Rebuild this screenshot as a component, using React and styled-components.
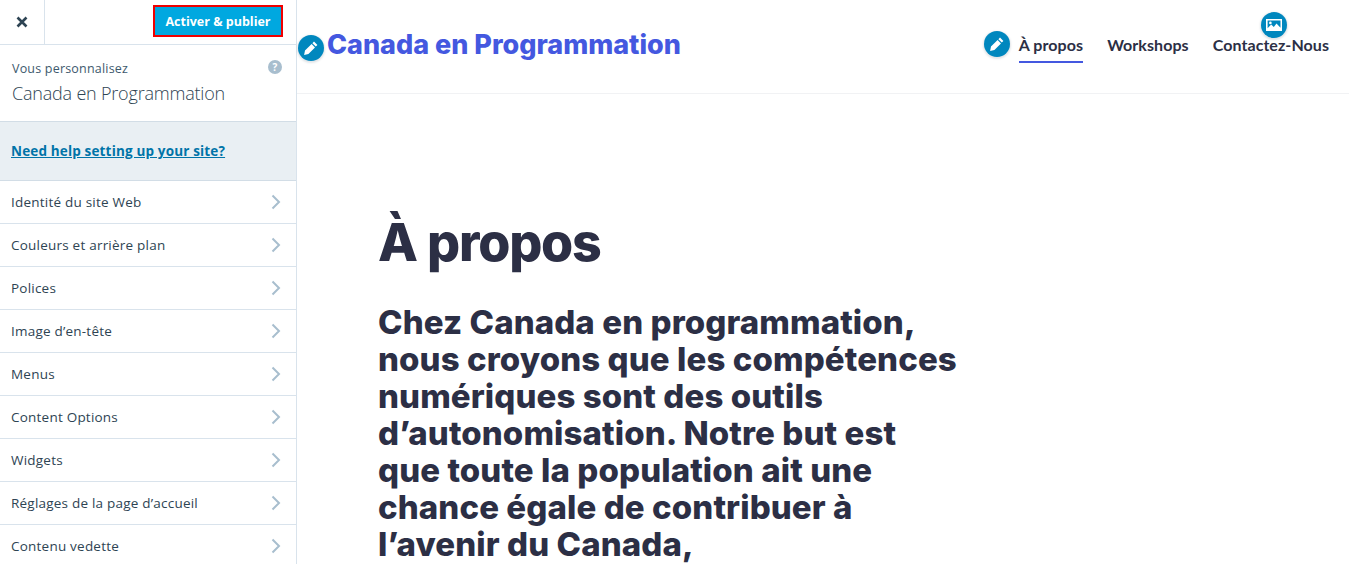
import React from "react";
import styled, { createGlobalStyle } from "styled-components";

const GlobalStyle = createGlobalStyle`
  html, body {
    margin: 0;
    padding: 0;
    height: 100%;
    overflow: hidden;
    background: #fff;
  }
  * {
    box-sizing: border-box;
  }
`;

//#region styled components
const Page = styled.div`
  display: flex;
  width: 1349px;
  height: 564px;
  overflow: hidden;
`;

const Sidebar = styled.aside`
  flex: 0 0 297px;
  height: 564px;
  border-right: 1px solid #d9e3ec;
  font-family: "Open Sans", sans-serif;
  overflow: hidden;
  background: #fff;
`;
const SideHeader = styled.div`
  display: flex;
  align-items: center;
  justify-content: space-between;
  height: 45px;
  padding-right: 13px;
  border-bottom: 1px solid #d9e3ec;
`;
const CloseBox = styled.div`
  display: flex;
  align-items: center;
  justify-content: center;
  width: 45px;
  height: 44px;
  border-right: 1px solid #d9e3ec;
  color: #2e4453;
`;
const Publish = styled.button`
  width: 130px;
  height: 32px;
  margin-top: -2px;
  padding: 0;
  border: 2px solid #f00000;
  background: #00a8e0;
  color: #fff;
  font-family: "Open Sans", sans-serif;
  font-size: 12.5px;
  font-weight: 700;
`;
const SiteInfo = styled.div`
  position: relative;
  height: 77px;
  padding: 16px 12px 0;
  border-bottom: 1px solid #d2dde6;
`;
const Small = styled.div`
  font-size: 12.5px;
  line-height: 16px;
  letter-spacing: 0.2px;
  color: #3d596d;
`;
const SiteName = styled.div`
  margin-top: 4px;
  font-size: 18px;
  font-weight: 300;
  line-height: 24px;
  letter-spacing: -0.2px;
  color: #2e4453;
`;
const HelpIcon = styled.span`
  position: absolute;
  top: 15px;
  right: 14px;
  display: flex;
  align-items: center;
  justify-content: center;
  width: 14px;
  height: 14px;
  border-radius: 50%;
  background: #a8bece;
  color: #fff;
  font-size: 10px;
  font-weight: 700;
`;
const HelpBand = styled.div`
  display: flex;
  align-items: center;
  height: 59px;
  padding-left: 11px;
  background: #e9eff3;
  border-bottom: 1px solid #d2dde6;
`;
const HelpLink = styled.a`
  font-size: 13.5px;
  font-weight: 700;
  letter-spacing: 0.16px;
  color: #0074a8;
  text-decoration: underline;
`;
const Row = styled.div`
  display: flex;
  align-items: center;
  justify-content: space-between;
  height: 43px;
  padding: 0 15px 0 11px;
  border-bottom: 1px solid #d9e3ec;
  font-size: 13.5px;
  letter-spacing: 0.22px;
  color: #2e4453;
`;

const Preview = styled.main`
  position: relative;
  flex: 1;
  min-width: 0;
`;
const SiteHeader = styled.header`
  display: flex;
  align-items: center;
  justify-content: space-between;
  height: 94px;
  padding: 0 20px 4px 30px;
  border-bottom: 1px solid #f1f2f4;
`;
const Brand = styled.div`
  font-family: Inter, sans-serif;
  font-size: 27px;
  font-weight: 800;
  color: #4458e0;
`;
const Nav = styled.nav`
  display: flex;
  gap: 24px;
`;
const NavLink = styled.a`
  padding: 8px 0 7px;
  border-bottom: 2px solid ${props => (props.$active ? "#4458e0" : "transparent")};
  font-family: Lato, sans-serif;
  font-size: 16px;
  font-weight: 700;
  letter-spacing: 0.07px;
  color: #2c2f45;
`;
const Content = styled.section`
  padding: 118px 0 0 81px;
  font-family: Inter, sans-serif;
  color: #2c2f45;
`;
const Title = styled.h1`
  margin: 0;
  font-size: 52px;
  font-weight: 800;
  line-height: 62px;
  letter-spacing: -1.2px;
`;
const Lead = styled.p`
  margin: 30px 0 0;
  font-size: 33px;
  font-weight: 800;
  line-height: 37px;
  letter-spacing: 0.1px;
  white-space: nowrap;
`;
const EditBadge = styled.span`
  position: absolute;
  left: ${props => props.$left}px;
  top: ${props => props.$top}px;
  display: flex;
  align-items: center;
  justify-content: center;
  width: 26px;
  height: 26px;
  border-radius: 50%;
  background: #0087be;
  box-shadow: 0 1px 2px 1px rgba(60, 80, 100, 0.15);
  color: #fff;
`;
//#endregion

const sections = [
  "Identité du site Web",
  "Couleurs et arrière plan",
  "Polices",
  "Image d’en-tête",
  "Menus",
  "Content Options",
  "Widgets",
  "Réglages de la page d’accueil",
  "Contenu vedette"
];

const CloseIcon = () => (
  <svg width="14" height="14" viewBox="0 0 14 14">
    <path d="M2.5 2.5l9 9M11.5 2.5l-9 9" stroke="currentColor" strokeWidth="2.6" fill="none" />
  </svg>
);

const Chevron = () => (
  <svg width="10" height="16" viewBox="0 0 10 16">
    <path d="M1.5 1.5L8 8l-6.5 6.5" stroke="#a8bece" strokeWidth="2" fill="none" />
  </svg>
);

const Pencil = () => (
  <svg width="16" height="16" viewBox="0 0 16 16" fill="currentColor">
    <path d="M11 1.6l3.4 3.4-1.6 1.6-3.4-3.4zM8.6 4l3.4 3.4-6.6 6.6-4.3 1 .9-4.4z" />
  </svg>
);

const ImageIcon = () => (
  <svg width="16" height="14" viewBox="0 0 16 14">
    <path
      fill="currentColor"
      fillRule="evenodd"
      d="M0 1h16v12H0zM1.6 2.6v7.6l3.6-3.7 2.6 2.4 2.7-3.3 4 4.2V2.6zM4.4 3.6a1.3 1.3 0 1 1 0 2.6 1.3 1.3 0 0 1 0-2.6z"
    />
  </svg>
);

export default function App() {
  return (
    <Page>
      <GlobalStyle />
      <Sidebar>
        <SideHeader>
          <CloseBox>
            <CloseIcon />
          </CloseBox>
          <Publish>Activer &amp; publier</Publish>
        </SideHeader>
        <SiteInfo>
          <Small>Vous personnalisez</Small>
          <SiteName>Canada en Programmation</SiteName>
          <HelpIcon>?</HelpIcon>
        </SiteInfo>
        <HelpBand>
          <HelpLink>Need help setting up your site?</HelpLink>
        </HelpBand>
        {sections.map(s => (
          <Row key={s}>
            {s}
            <Chevron />
          </Row>
        ))}
      </Sidebar>
      <Preview>
        <SiteHeader>
          <Brand>Canada en Programmation</Brand>
          <Nav>
            <NavLink $active>À propos</NavLink>
            <NavLink>Workshops</NavLink>
            <NavLink>Contactez-Nous</NavLink>
          </Nav>
        </SiteHeader>
        <EditBadge $left={1} $top={35}>
          <Pencil />
        </EditBadge>
        <EditBadge $left={687} $top={31}>
          <Pencil />
        </EditBadge>
        <EditBadge $left={964} $top={12}>
          <ImageIcon />
        </EditBadge>
        <Content>
          <Title>À propos</Title>
          <Lead>
            Chez Canada en programmation,
            <br />
            nous croyons que les compétences
            <br />
            numériques sont des outils
            <br />
            d’autonomisation. Notre but est
            <br />
            que toute la population ait une
            <br />
            chance égale de contribuer à
            <br />
            l’avenir du Canada,
          </Lead>
        </Content>
      </Preview>
    </Page>
  );
}
